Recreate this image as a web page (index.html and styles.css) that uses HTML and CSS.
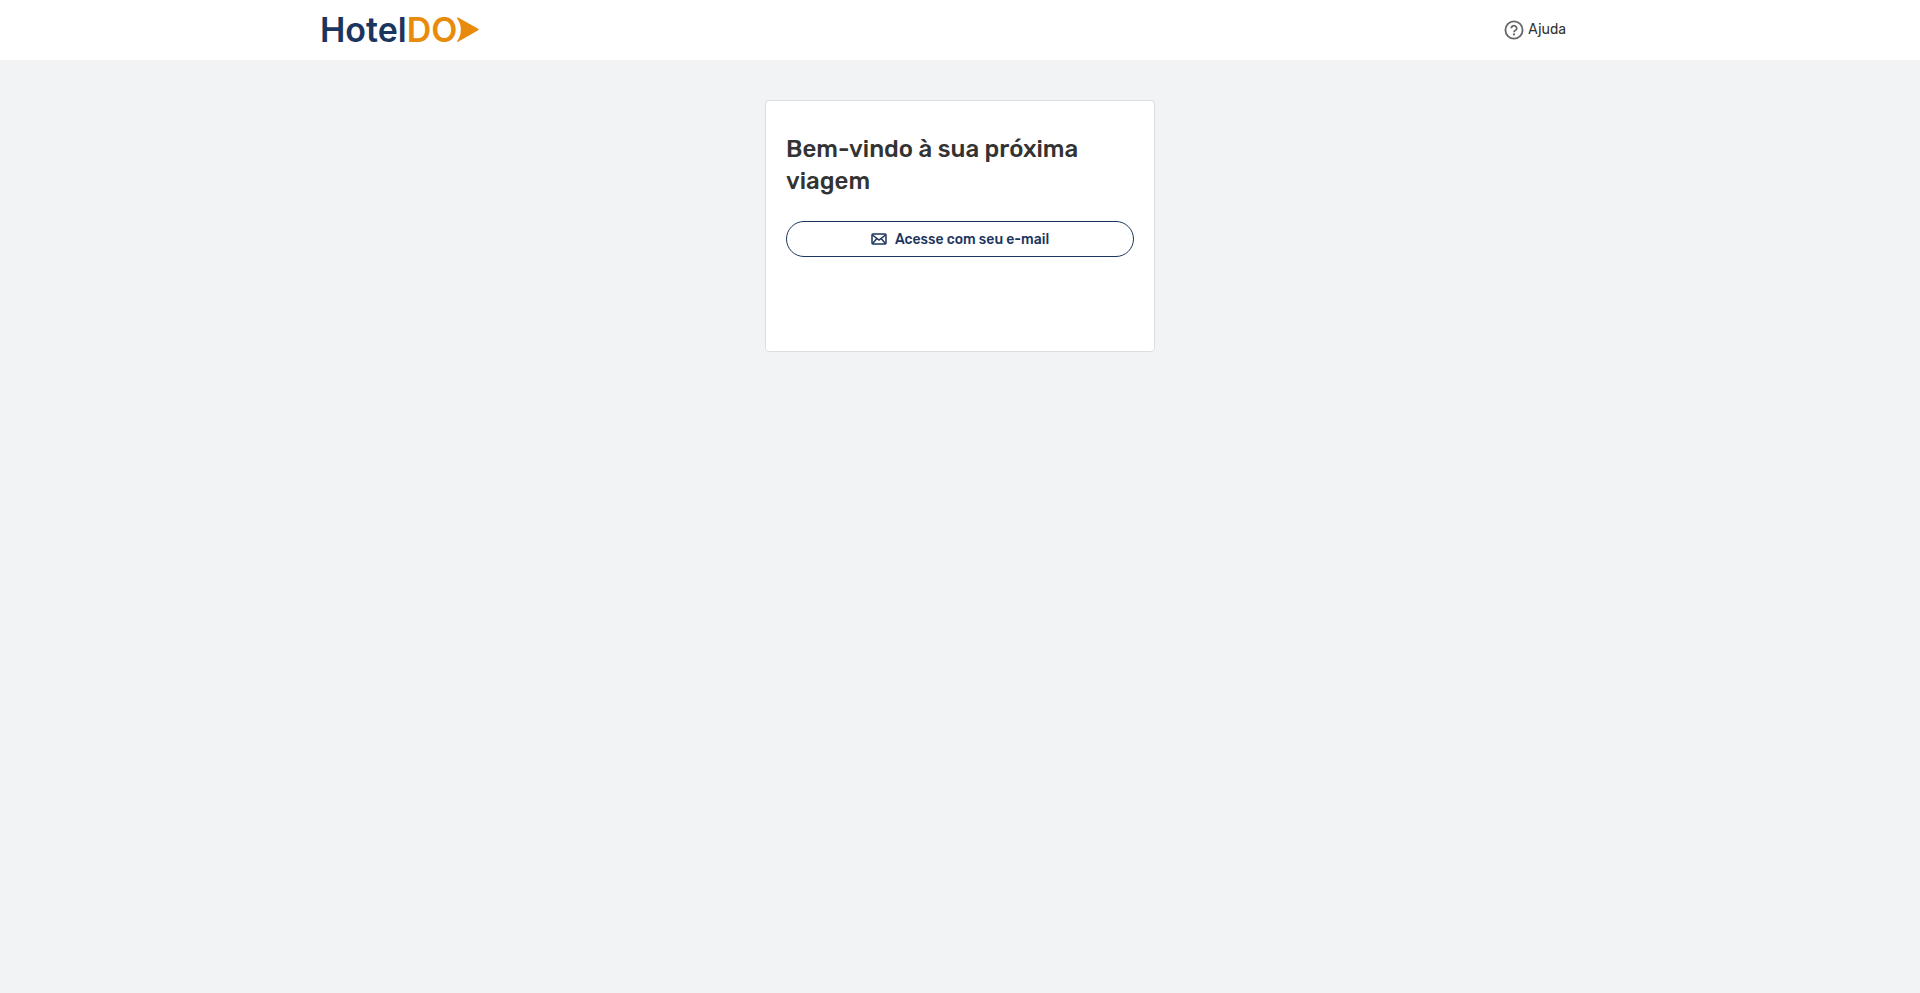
FILE: index.html
```html
<!DOCTYPE html>
<html lang="pt-BR">
<head>
  <meta charset="UTF-8">
  <meta name="viewport" content="width=device-width, initial-scale=1.0">
  <title>HotelDO</title>
  <link rel="stylesheet" href="styles.css">
</head>
<body>
  <!-- Cabeçalho -->
  <header class="header">
    <div class="header-content">
      <a href="#" class="logo">
        <span class="logo-hotel">Hotel</span><span class="logo-do">DO</span>
        <svg class="logo-arrow" viewBox="0 0 22 26" aria-hidden="true">
          <path d="M1.6.8 20.8 11.6q1.6.9 0 1.8L1.6 24.6Q0 25.400 0 24.200 3.800 19.500 3.800 12.700T0 1.400Q.2.100 1.600.8Z"/>
        </svg>
      </a>
      <a href="#" class="help">
        <svg class="help-icon" viewBox="0 0 20 20" aria-hidden="true">
          <circle cx="10" cy="10" r="8.600"/>
          <path d="M7.300 8.300a2.700 2.500 0 1 1 4.200 2Q10 11 10 12.200"/>
          <circle class="dot" cx="10" cy="14.400" r="1.100"/>
        </svg>
        <span>Ajuda</span>
      </a>
    </div>
  </header>

  <!-- Login -->
  <main class="main">
    <section class="card">
      <h1>Bem-vindo à sua próxima viagem</h1>
      <button type="button" class="btn-email">
        <svg class="mail-icon" viewBox="0 0 16 12" aria-hidden="true">
          <rect x="1" y="1" width="14" height="10" rx="1"/>
          <path d="M1.500 2 8 7l6.500-5M1.500 10.500l4-4.500M14.500 10.500l-4-4.500"/>
        </svg>
        <span>Acesse com seu e-mail</span>
      </button>
    </section>
  </main>
</body>
</html>
```

FILE: styles.css
```css
* {
  margin: 0;
  padding: 0;
  box-sizing: border-box;
}

body {
  min-height: 100vh;
  font-family: Rubik, Roboto, sans-serif;
  color: #333;
  background-color: #f2f3f5;
}

/* Cabeçalho */
.header {
  background-color: #fff;
}

.header-content {
  display: flex;
  justify-content: space-between;
  align-items: center;
  max-width: 1280px;
  height: 60px;
  margin: 0 auto;
  padding-right: 34px;
}

.logo {
  display: flex;
  align-items: center;
  font-family: Inter, sans-serif;
  font-size: 34px;
  font-weight: 600;
  line-height: 40px;
  text-decoration: none;
}

.logo-hotel {
  color: #1c355e;
}

.logo-do {
  color: #e88b0c;
}

.logo-arrow {
  width: 22px;
  height: 26px;
  fill: #e88b0c;
}

.help {
  display: flex;
  align-items: center;
  gap: 4px;
  font-size: 14px;
  line-height: 20px;
  color: #333;
  text-decoration: none;
}

.help-icon {
  width: 20px;
  height: 20px;
  fill: none;
  stroke: #666;
  stroke-width: 1.8;
}

.help-icon .dot {
  fill: #666;
  stroke: none;
}

/* Login */
.main {
  padding: 40px 16px;
}

.card {
  max-width: 390px;
  min-height: 252px;
  margin: 0 auto;
  padding: 32px 20px;
  background-color: #fff;
  border: 1px solid #dcdee0;
  border-radius: 4px;
}

.card h1 {
  margin-bottom: 24px;
  font-size: 24px;
  font-weight: 500;
  line-height: 32px;
}

.btn-email {
  display: flex;
  justify-content: center;
  align-items: center;
  gap: 8px;
  width: 100%;
  height: 36px;
  font-family: inherit;
  font-size: 14px;
  font-weight: 500;
  color: #1c355e;
  background-color: #fff;
  border: 1px solid #1c355e;
  border-radius: 18px;
  cursor: pointer;
}

.btn-email:hover {
  background-color: #f2f3f5;
}

.mail-icon {
  width: 16px;
  height: 12px;
  fill: none;
  stroke: #1c355e;
  stroke-width: 1.5;
}
```
